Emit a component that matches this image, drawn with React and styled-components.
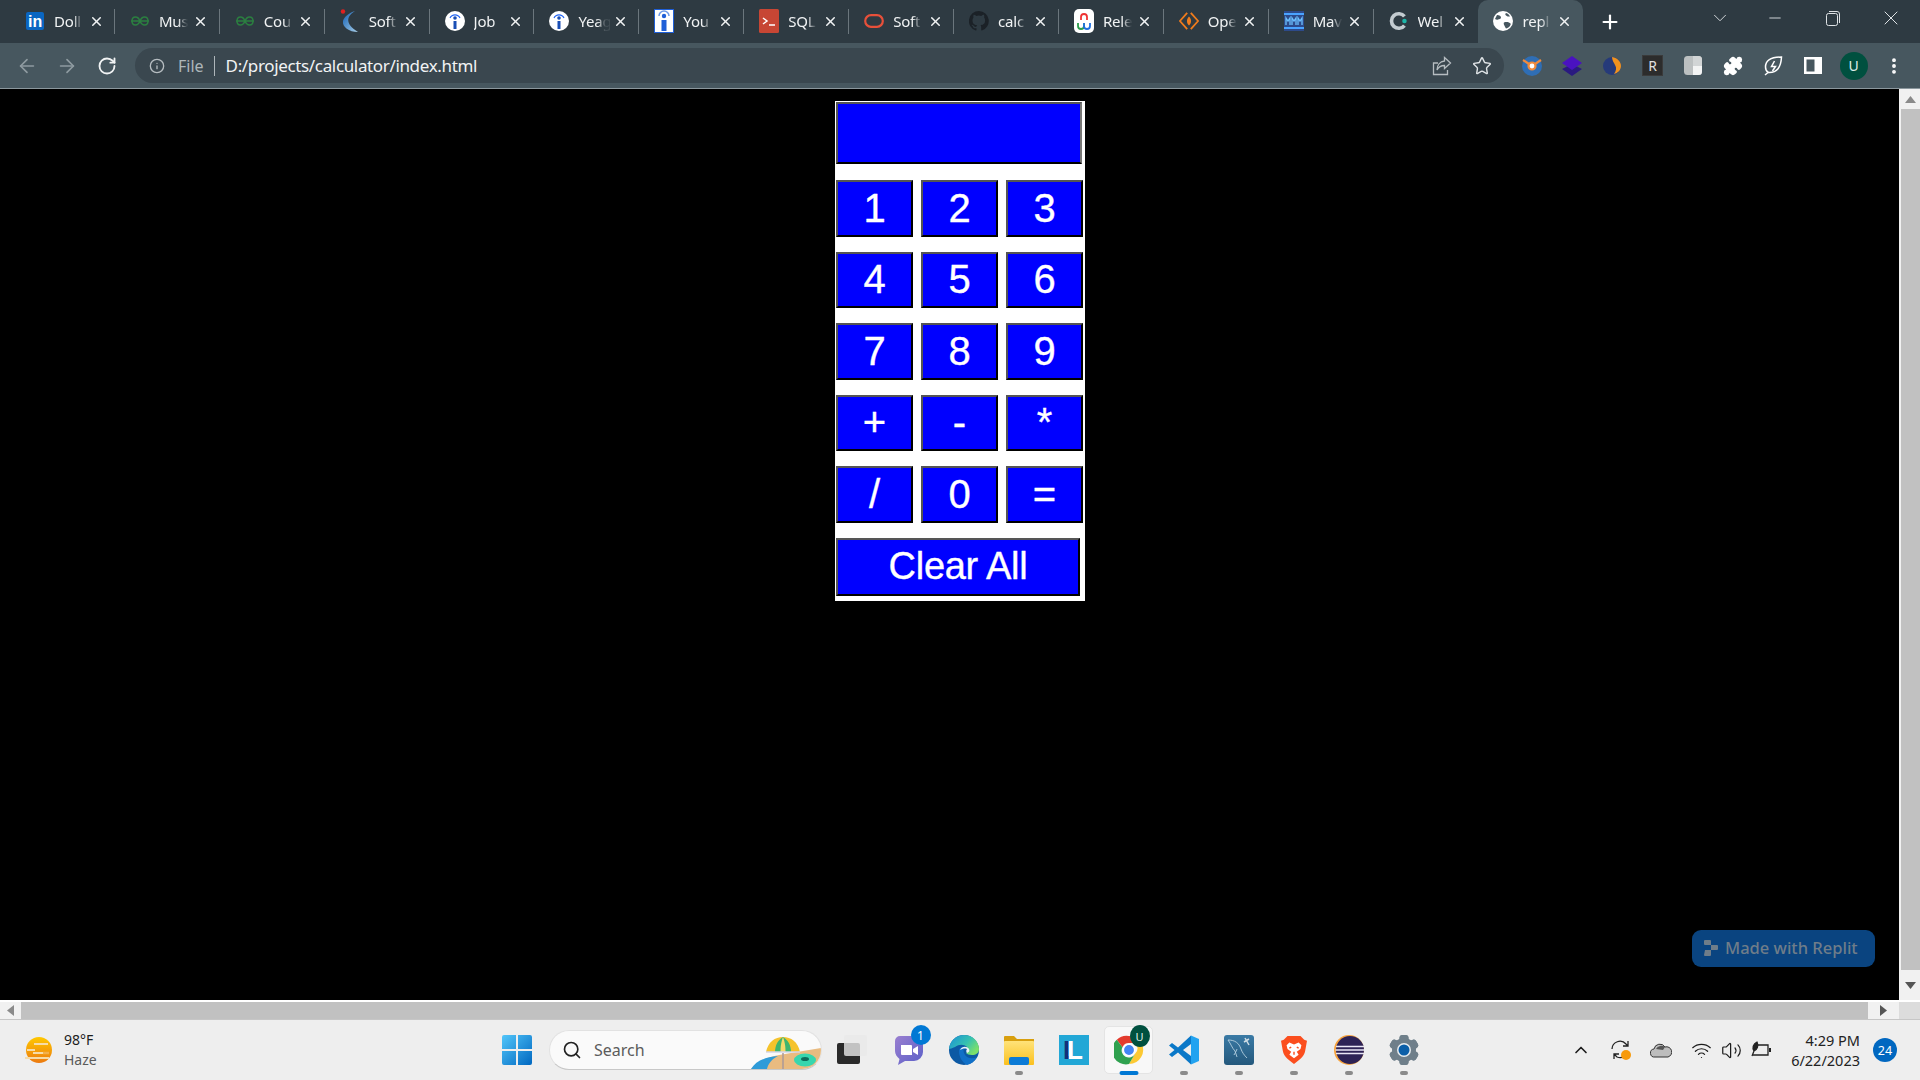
import React from "react";
import styled, { createGlobalStyle } from "styled-components";
import {
  X,
  Plus,
  ChevronDown,
  ArrowLeft,
  ArrowRight,
  RotateCw,
  Info,
  Star,
  Minus,
  Puzzle,
  Search,
  ChevronUp,
  Wifi,
  Volume2,
  MoreVertical,
} from "lucide-react";

const GlobalStyle = createGlobalStyle`
  html, body { margin: 0; padding: 0; height: 100%; overflow: hidden; background: #000; }
  #root { height: 100%; }
  * { box-sizing: border-box; }
`;

const UI_FONT = `"Noto Sans", "Open Sans", sans-serif`;

const Screen = styled.div`
  width: 1920px;
  height: 1080px;
  display: flex;
  flex-direction: column;
  font-family: ${UI_FONT};
  position: relative;
`;

/* tabs */
const TabStrip = styled.div`
  height: 43px;
  background: #2e3a42;
  display: flex;
  padding-left: 10px;
  flex: none;
`;

const Tab = styled.div`
  width: 104.9px;
  height: 43px;
  display: flex;
  align-items: center;
  padding: 0 0 1px 15px;
  position: relative;
  color: #e8eaed;
  background: ${(p) => (p.$active ? "#47575f" : "transparent")};
  border-radius: ${(p) => (p.$active ? "10px 10px 0 0" : "0")};
  ${(p) =>
    p.$sep
      ? `&::after {
    content: "";
    position: absolute;
    right: 0;
    top: 9px;
    height: 25px;
    width: 1px;
    background: #6b767d;
  }`
      : ""}
`;

const TabIcon = styled.div`
  width: 20px;
  height: 24px;
  flex: none;
  display: flex;
  align-items: center;
  justify-content: center;
`;

const TabTitle = styled.div`
  width: 32px;
  margin-left: 9px;
  font-size: 15px;
  line-height: 20px;
  letter-spacing: -0.2px;
  white-space: nowrap;
  overflow: hidden;
  color: #f1f3f4;
  -webkit-mask-image: linear-gradient(90deg, #000 60%, rgba(0, 0, 0, 0.1) 86%);
  mask-image: linear-gradient(90deg, #000 60%, rgba(0, 0, 0, 0.1) 86%);
`;

const TabClose = styled.div`
  margin-left: 2px;
  width: 16px;
  height: 16px;
  display: flex;
  align-items: center;
  justify-content: center;
  color: #f1f3f4;
`;

const NewTab = styled.div`
  width: 36px;
  height: 43px;
  margin-left: 9px;
  display: flex;
  align-items: center;
  justify-content: center;
  color: #fff;
`;

const WindowControls = styled.div`
  margin-left: auto;
  display: flex;
  align-items: center;
  height: 36px;
  color: #dfe3e6;
`;

const WinButton = styled.div`
  width: ${(p) => p.$w}px;
  height: 36px;
  display: flex;
  align-items: center;
  justify-content: center;
`;

/* toolbar */
const Toolbar = styled.div`
  height: 46px;
  background: #47575f;
  border-bottom: 1px solid #8b979d;
  padding: 5px 0 5px 7px;
  display: flex;
  align-items: flex-start;
  flex: none;
`;

const NavButton = styled.div`
  width: 40px;
  height: 35px;
  display: flex;
  align-items: center;
  justify-content: center;
  color: ${(p) => (p.$dim ? "#8f9ba1" : "#f1f3f4")};
`;

const Omnibox = styled.div`
  margin-left: 8px;
  width: 1369px;
  height: 35px;
  border-radius: 18px;
  background: #3a474f;
  display: flex;
  align-items: center;
  padding-left: 14px;
  color: #b6bdc1;
  flex: none;
`;

const FileLabel = styled.span`
  font-size: 16px;
  margin-left: 13px;
  color: #aeb6ba;
`;

const Divider = styled.span`
  width: 1px;
  height: 20px;
  background: #aeb6ba;
  margin: 0 11px 0 10px;
`;

const Url = styled.span`
  font-size: 17px;
  letter-spacing: -0.35px;
  color: #f1f3f4;
`;

const OmniAction = styled.div`
  width: 40px;
  height: 35px;
  display: flex;
  align-items: center;
  justify-content: center;
  margin-left: ${(p) => p.$left || 0}px;
  color: #b6bdc1;
`;

const Extensions = styled.div`
  display: flex;
  margin-left: 8px;
`;

const ExtButton = styled.div`
  width: 40.2px;
  height: 35px;
  display: flex;
  align-items: center;
  justify-content: center;
  color: #fff;
`;

const Avatar = styled.div`
  width: 28px;
  height: 28px;
  border-radius: 50%;
  background: #00503f;
  color: #dfeee9;
  font-size: 14px;
  display: flex;
  align-items: center;
  justify-content: center;
`;

/* page area */
const Middle = styled.div`
  flex: 1;
  display: flex;
  min-height: 0;
`;

const Viewport = styled.div`
  flex: 1;
  background: #000;
  padding: 12px 0 0 835px;
`;

const VScroll = styled.div`
  width: 21px;
  background: #f1f1f1;
  display: flex;
  flex-direction: column;
  align-items: flex-end;
  flex: none;
`;

const ScrollArrow = styled.div`
  width: 19px;
  height: ${(p) => p.$h}px;
  display: flex;
  align-items: center;
  justify-content: center;
`;

const VThumb = styled.div`
  width: 19px;
  flex: 1;
  background: #c1c1c1;
`;

const HScroll = styled.div`
  height: 20px;
  flex: none;
  display: flex;
  background: #f1f1f1;
  border-top: 2px solid #fff;
  border-bottom: 1px solid #c6c6c6;
`;

const HThumb = styled.div`
  width: 1847px;
  background: #c1c1c1;
`;

const HArrow = styled.div`
  width: ${(p) => p.$w}px;
  display: flex;
  align-items: center;
  justify-content: center;
`;

const Corner = styled.div`
  width: 21px;
  background: #dcdcdc;
`;

/* calculator */
const Calculator = styled.div`
  width: 250px;
  height: 500px;
  background: #fff;
  padding: 1px 0 0 1px;
`;

const Display = styled.div`
  width: 246px;
  height: 62px;
  background: #0000ff;
  border-style: solid;
  border-width: 2px;
  border-color: #555 #767676 #000 #555;
  margin-bottom: 16px;
`;

const Keys = styled.div`
  display: grid;
  grid-template-columns: repeat(3, 77px);
  grid-auto-rows: 56.5px;
  column-gap: 8px;
  row-gap: 15px;
`;

const Key = styled.button`
  background: #0000ff;
  color: #fff;
  font-family: "Liberation Sans", Arial, sans-serif;
  font-size: 40px;
  -webkit-text-stroke: 0.35px #fff;
  padding: 0;
  border-style: solid;
  border-width: 2px;
  border-color: #555 #000 #000 #555;
`;

const ClearKey = styled(Key)`
  grid-column: 1 / -1;
  width: 244px;
  height: 58px;
  font-size: 38px;
  letter-spacing: -0.3px;
`;

const Badge = styled.div`
  position: absolute;
  left: 1692px;
  top: 930px;
  width: 183px;
  height: 37px;
  border-radius: 9px;
  background: #0a4480;
  color: #6f7d89;
  font-size: 16.5px;
  font-weight: 500;
  font-family: "Noto Sans", sans-serif;
  display: flex;
  align-items: center;
  padding: 0 0 2px 12px;
  gap: 7px;
`;

/* taskbar */
const Taskbar = styled.div`
  height: 60px;
  flex: none;
  background: #eee;
  display: flex;
  align-items: center;
  position: relative;
`;

const Weather = styled.div`
  width: 502px;
  height: 60px;
  padding-left: 24px;
  display: flex;
  align-items: center;
  flex: none;
`;

const WeatherText = styled.div`
  margin-left: 10px;
  font-size: 14px;
  line-height: 20px;
  color: #1c1c1c;
`;

const Haze = styled.div`
  color: #5a5a5a;
`;

const Pill = styled.div`
  margin-left: 17px;
  width: 273px;
  height: 40px;
  border-radius: 20px;
  background: #fafafa;
  border: 1px solid #e2e2e2;
  border-bottom-color: #c8c8c8;
  display: flex;
  align-items: center;
  padding-left: 12px;
  color: #222;
  position: relative;
  overflow: hidden;
  flex: none;
`;

const PillText = styled.span`
  margin-left: 12px;
  font-size: 16px;
  color: #5c5c5c;
`;

const PillArt = styled.div`
  position: absolute;
  right: 0;
  top: 0;
`;

const AppSlot = styled.div`
  width: ${(p) => p.$w || 55}px;
  height: 60px;
  flex: none;
  display: flex;
  align-items: center;
  justify-content: center;
  position: relative;
  ${(p) =>
    p.$active
      ? `&::before {
    content: "";
    position: absolute;
    left: 3px;
    right: 3px;
    top: 6px;
    bottom: 6px;
    background: #f8f8f8;
    border: 1px solid #e4e4e4;
    border-radius: 5px;
  }`
      : ""}
`;

const AppIcon = styled.div`
  position: relative;
  width: 32px;
  height: 32px;
  display: flex;
  align-items: center;
  justify-content: center;
`;

const RunDot = styled.div`
  position: absolute;
  left: 50%;
  bottom: 5px;
  transform: translateX(-50%);
  width: ${(p) => (p.$active ? 19 : 8)}px;
  height: 4px;
  border-radius: 2px;
  background: ${(p) => (p.$active ? "#0078d4" : "#8a8a8a")};
`;

const CountDot = styled.div`
  position: absolute;
  right: -6px;
  top: -9px;
  width: 20px;
  height: 20px;
  border-radius: 50%;
  background: #0078d4;
  color: #fff;
  font-size: 12px;
  display: flex;
  align-items: center;
  justify-content: center;
`;

const Tray = styled.div`
  position: absolute;
  right: 23px;
  top: 0;
  height: 60px;
  display: flex;
  align-items: center;
`;

const TraySlot = styled.div`
  width: ${(p) => p.$w}px;
  height: 30px;
  margin-left: ${(p) => p.$left || 0}px;
  display: flex;
  align-items: center;
  justify-content: center;
  color: #1c1c1c;
`;

const Clock = styled.div`
  width: 84px;
  text-align: right;
  font-size: 14.5px;
  line-height: 20px;
  color: #222;
`;

const NotifyCount = styled.div`
  margin-left: 13px;
  width: 24px;
  height: 24px;
  border-radius: 50%;
  background: #0067c0;
  color: #fff;
  font-size: 12.5px;
  display: flex;
  align-items: center;
  justify-content: center;
`;

/* favicons */
const LinkedIn = () => (
  <svg width="18" height="18" viewBox="0 0 18 18">
    <rect width="18" height="18" rx="2" fill="#0a66c2" />
    <text x="2" y="15" fontSize="16" fontWeight="700" fill="#fff" fontFamily="Liberation Sans">in</text>
  </svg>
);
const Gfg = () => (
  <svg width="18" height="10" viewBox="0 0 18 10" fill="none" stroke="#2b7f40" strokeWidth="1.500">
    <path d="M0 5h18M9 5C8 2.500 6.500 1 4.500 1S1 2.700 1 5M9 5c1-2.500 2.500-4 4.500-4S17 2.700 17 5M9 5c-1 2.500-2.500 4-4.500 4S1 7.300 1 5M9 5c1 2.500 2.500 4 4.500 4S17 7.300 17 5" />
  </svg>
);
const Crescent = () => (
  <svg width="20" height="24" viewBox="0 0 20 24">
    <defs>
      <linearGradient id="cres" x1="0" y1="0" x2="1" y2="1">
        <stop offset="0" stopColor="#0f5fb5" />
        <stop offset="1" stopColor="#a9cfe8" />
      </linearGradient>
    </defs>
    <path d="M15 2C7 7 4 14 18 23 9 23 2 18 3 12 4 8 9 4 15 2z" fill="url(#cres)" />
    <circle cx="3" cy="2.500" r="2.200" fill="#e02020" />
  </svg>
);
const InfoFav = () => (
  <svg width="20" height="20" viewBox="0 0 20 20">
    <circle cx="10" cy="10" r="10" fill="#fff" />
    <circle cx="10" cy="7" r="1.800" fill="#1a4fb5" />
    <rect x="8.500" y="10" width="3" height="8" fill="#1a4fb5" />
    <path d="M5 7a5.500 5.500 0 0 1 10 0" fill="none" stroke="#2164f3" strokeWidth="1.200" />
  </svg>
);
const YouFav = () => (
  <svg width="20" height="24" viewBox="0 0 20 24">
    <rect x="0.500" y="0.500" width="19" height="23" fill="#fff" stroke="#1f5fd8" />
    <path d="M5 7a5 5 0 0 1 10 0" fill="none" stroke="#6f9be8" strokeWidth="1.500" />
    <circle cx="10" cy="7" r="2.200" fill="#1f5fd8" />
    <rect x="7.500" y="11" width="5" height="11" fill="#1f5fd8" />
  </svg>
);
const SqlFav = () => (
  <svg width="20" height="24" viewBox="0 0 20 24">
    <rect width="20" height="24" rx="1.500" fill="#c74634" />
    <path d="M4 9l4 3-4 3" fill="none" stroke="#fff" strokeWidth="1.500" />
    <path d="M10 16h6" stroke="#fff" strokeWidth="1.500" />
  </svg>
);
const OracleFav = () => (
  <svg width="20" height="14" viewBox="0 0 20 14">
    <rect x="1.200" y="1.200" width="17.600" height="11.600" rx="5.800" fill="none" stroke="#e8503a" strokeWidth="2.200" />
  </svg>
);
const GithubFav = () => (
  <svg width="20" height="22" viewBox="0 0 20 20">
    <path
      fill="#1b2127"
      d="M10 0a10 10 0 0 0-3.200 19.500c.5.100.7-.2.700-.5v-1.800c-2.800.6-3.400-1.300-3.400-1.300-.5-1.200-1.100-1.500-1.100-1.500-.9-.6.100-.6.100-.6 1 .1 1.500 1 1.500 1 .9 1.500 2.300 1.100 2.900.8.100-.6.300-1.100.6-1.300-2.200-.3-4.600-1.100-4.600-5 0-1.100.4-2 1-2.700-.1-.3-.4-1.300.1-2.700 0 0 .8-.3 2.700 1a9.400 9.400 0 0 1 5 0c1.900-1.300 2.700-1 2.700-1 .5 1.400.2 2.400.1 2.700.6.700 1 1.600 1 2.700 0 3.900-2.300 4.700-4.600 5 .4.300.7.900.7 1.900V19c0 .3.200.6.700.5A10 10 0 0 0 10 0z"
    />
  </svg>
);
const ReleFav = () => (
  <svg width="20" height="24" viewBox="0 0 20 24" fill="none" strokeWidth="1.800">
    <rect width="20" height="24" rx="5" fill="#fff" />
    <path d="M7 11V8a3 3 0 0 1 6 0v3" stroke="#e33" />
    <path d="M4 14v3a3 3 0 0 0 6 0v-3" stroke="#2a9d4a" />
    <path d="M10 14v3a3 3 0 0 0 6 0v-3" stroke="#1f6fe0" />
  </svg>
);
const OpeFav = () => (
  <svg width="22" height="22" viewBox="0 0 22 22" fill="none">
    <path d="M9 2L1 11l8 9M13 2l8 9-8 9" stroke="#ef7b1c" strokeWidth="2" />
    <path d="M11 6c3 3 3 7 0 10-3-3-3-7 0-10z" fill="#ef7b1c" />
  </svg>
);
const MavFav = () => (
  <svg width="20" height="20" viewBox="0 0 20 20">
    <rect width="20" height="20" fill="#2d4a8a" />
    <rect y="2" width="20" height="2" fill="#4aa3ff" />
    <rect y="16" width="20" height="2" fill="#4aa3ff" />
    <path d="M2 14V7l2 3 2-3v7M8 14V7l2 3 2-3v7M14 14V7l2 3 2-3v7" fill="none" stroke="#6cc0ff" strokeWidth="1.300" />
  </svg>
);
const WelFav = () => (
  <svg width="22" height="22" viewBox="0 0 22 22">
    <path d="M17 6a8 8 0 1 0 0 10" fill="none" stroke="#c3cbd0" strokeWidth="4" />
    <circle cx="17" cy="11" r="2.500" fill="#1db5a8" />
  </svg>
);
const Globe = () => (
  <svg width="20" height="20" viewBox="0 0 20 20">
    <circle cx="10" cy="10" r="10" fill="#fff" />
    <path d="M4 4c2.500 0 4 1 4 2.500S6 8 5 8.500 3 8.500 2 8zM11 11.500c3-1 5.500 0 6.500 1s-2 5-4.500 5c-1-2-3-4.500-2-6zM13 2c2 .5 3 1.500 4 3.500-2 0-3 0-4-1s-1-1.500 0-2.500z" fill="#47575f" />
  </svg>
);

const tabs = [
  ["Doll", LinkedIn],
  ["Mus", Gfg],
  ["Cou", Gfg],
  ["Soft", Crescent],
  ["Job", InfoFav],
  ["Yeag", InfoFav],
  ["You", YouFav],
  ["SQL", SqlFav],
  ["Soft", OracleFav],
  ["calc", GithubFav],
  ["Rele", ReleFav],
  ["Ope", OpeFav],
  ["Mav", MavFav],
  ["Wel", WelFav],
  ["repl", Globe],
];

/* toolbar extensions */
const ExtOrange = () => (
  <svg width="20" height="20" viewBox="0 0 20 20">
    <circle cx="10" cy="10" r="10" fill="#2f6eb5" />
    <path d="M1 4l6 4M19 4l-6 4" stroke="#f08a3c" strokeWidth="2.200" />
    <circle cx="10" cy="10" r="3.500" fill="#fff" stroke="#f08a3c" strokeWidth="2.200" />
  </svg>
);
const ExtStack = () => (
  <svg width="20" height="20" viewBox="0 0 20 20">
    <path d="M10 8l10 5-10 7-10-7z" fill="#2a1a80" />
    <path d="M10 0l10 7-10 7L0 7z" fill="#4a12c0" />
  </svg>
);
const ExtSwift = () => (
  <svg width="18" height="20" viewBox="0 0 18 20">
    <circle cx="9" cy="10" r="9" fill="#263a7a" />
    <path d="M9 1c6 1 9 5 9 9 0 4-3 7-7 8 2-3 3-6 1-9-1-2-3-5-3-8z" fill="#f0921e" />
  </svg>
);
const ExtR = styled.div`
  width: 21px;
  height: 21px;
  background: #2c2c2c;
  border: 1px solid #3a3a3a;
  color: #e0e0e0;
  font-size: 14px;
  display: flex;
  align-items: center;
  justify-content: center;
`;
const ExtNote = () => (
  <svg width="18" height="19" viewBox="0 0 18 19">
    <rect width="18" height="19" rx="3.500" fill="#bcc0c1" />
    <path d="M9 10h9v5.500a3.500 3.500 0 0 1-3.500 3.500H9z" fill="#f3f4f4" />
    <path d="M9 0h5.500A3.500 3.500 0 0 1 18 3.500V10H9z" fill="#d2d5d6" />
  </svg>
);
const ExtLeaf = () => (
  <svg width="20" height="20" viewBox="0 0 20 20" fill="none" stroke="#fff" strokeWidth="1.500">
    <path d="M18.500 1C9 1 2.500 4 2.500 11c0 3 1 4.500 3 5.500C14 17 18 11 18.500 1z" />
    <path d="M11.500 5l-3 5.500h4L9.500 15M5 16.500L2 19" />
  </svg>
);
const ExtPanel = () => (
  <svg width="18" height="17" viewBox="0 0 18 17">
    <rect width="18" height="17" fill="#fff" />
    <rect x="2.500" y="2.500" width="8" height="12" fill="#47575f" />
  </svg>
);

const ShareIcon = () => (
  <svg width="20" height="20" viewBox="0 0 20 20" fill="none" stroke="currentColor" strokeWidth="1.300">
    <path d="M6 7H1.500v11.500h14V14" />
    <path d="M12.500 1.500l6 5.500-6 5.500V9.500C9 9.500 6.500 11 5 14c0-5 3-8.500 7.500-9z" />
  </svg>
);

/* taskbar apps */
const Sun = () => (
  <svg width="30" height="32" viewBox="0 0 30 32">
    <defs>
      <linearGradient id="sun" x1="0" y1="0" x2="0" y2="1">
        <stop offset="0" stopColor="#ffc800" />
        <stop offset="1" stopColor="#ec7a10" />
      </linearGradient>
    </defs>
    <circle cx="15" cy="16" r="13" fill="url(#sun)" />
    <path d="M10 10h14M3 16h8M1 24h24M9 19h16" stroke="#f6dca8" strokeWidth="2" />
    <path d="M19 19h6" stroke="#f2b04a" strokeWidth="2.500" />
  </svg>
);
const WinLogo = () => (
  <svg width="30" height="30" viewBox="0 0 30 30">
    <defs>
      <linearGradient id="win" x1="0" y1="0" x2="1" y2="1">
        <stop offset="0" stopColor="#52c6fa" />
        <stop offset="1" stopColor="#0067c0" />
      </linearGradient>
    </defs>
    <path d="M0 2a2 2 0 0 1 2-2h12v14H0zM16 0h12a2 2 0 0 1 2 2v12H16zM0 16h14v14H2a2 2 0 0 1-2-2zM16 16h14v12a2 2 0 0 1-2 2H16z" fill="url(#win)" />
  </svg>
);
const Beach = () => (
  <svg width="70" height="38" viewBox="0 0 70 38">
    <path d="M0 38c6-7 16-12 28-14l42-7v21z" fill="#e9bb80" />
    <path d="M0 38c5-8 14-12 27-13-6 3-10 8-11 13z" fill="#2f9bd8" />
    <path d="M32 22v16" stroke="#a99" strokeWidth="1.500" />
    <path d="M15 21C17 11 24 6 32 6s15 5 17 15z" fill="#f5c32c" />
    <path d="M24 21c0-7 3-12 8-15 5 3 8 8 8 15z" fill="#3fb56f" />
    <path d="M29.500 21c0-7 1-11 2.500-15 1.500 4 2.500 8 2.500 15z" fill="#f5d96a" />
    <path d="M15 21h34" stroke="#d4d4e8" strokeWidth="1.500" />
    <ellipse cx="54" cy="29" rx="11" ry="6.500" fill="#37d6ae" />
    <ellipse cx="54" cy="28" rx="4" ry="2" fill="#0d6d5c" />
  </svg>
);
const TaskView = () => (
  <svg width="32" height="30" viewBox="0 0 32 30">
    <rect x="1" y="8" width="23" height="21" rx="2" fill="#2a2a2a" />
    <rect x="8" y="0" width="23" height="21" rx="2" fill="#e8e8e8" fillOpacity="0.8" />
  </svg>
);
const Teams = () => (
  <svg width="30" height="32" viewBox="0 0 30 32">
    <defs>
      <linearGradient id="teams" x1="0" y1="0" x2="1" y2="1">
        <stop offset="0" stopColor="#9a7fd0" />
        <stop offset="1" stopColor="#5a5fc8" />
      </linearGradient>
    </defs>
    <path d="M1 7a5 5 0 0 1 5-5h17a6 6 0 0 1 6 6v10a9 9 0 0 1-9 9h-9l-7 4 1.500-6C3 23 1 20 1 17z" fill="url(#teams)" />
    <path d="M7 11h10a1 1 0 0 1 1 1v9H8a1 1 0 0 1-1-1z" fill="#fff" />
    <path d="M19 15l5-3v9l-5-3z" fill="#fff" />
  </svg>
);
const Edge = () => (
  <svg width="30" height="30" viewBox="0 0 30 30">
    <defs>
      <linearGradient id="edgeA" x1="0" y1="0" x2="1" y2="0.600">
        <stop offset="0" stopColor="#1a90d8" />
        <stop offset="0.600" stopColor="#35c1b1" />
        <stop offset="1" stopColor="#7be06a" />
      </linearGradient>
    </defs>
    <circle cx="15" cy="15" r="15" fill="#0c59a4" />
    <path d="M0 14C1 5 8 0 15 0c8 0 15 6 15 14 0 4-3 6-7 6-3 0-5-1-6-2 2-1 3-3 1-6-3-3-8-3-12 0-3 1-5 2-6 2z" fill="url(#edgeA)" />
    <path d="M10 16c0-3 3-5 6-4-2 2-2 5 0 8 3 4 8 4 12 2-2 4-6 7-10 8-5-3-8-8-8-14z" fill="#1070c8" />
    <path d="M11 15c2-4 7-4 9-1 1 2 0 3-2 4-1-1-1-3 0-4-3-1-5 0-7 1z" fill="#eef4f8" />
  </svg>
);
const Explorer = () => (
  <svg width="30" height="30" viewBox="0 0 30 30">
    <defs>
      <linearGradient id="folder" x1="0" y1="0" x2="0" y2="1">
        <stop offset="0" stopColor="#ffe37a" />
        <stop offset="1" stopColor="#fbc01e" />
      </linearGradient>
    </defs>
    <path d="M0 2a1 1 0 0 1 1-1h9l3 3h17v4H0z" fill="#d89f0e" />
    <rect y="6" width="30" height="24" rx="1" fill="url(#folder)" />
    <rect x="5" y="22" width="20" height="8" rx="2" fill="#0c7bd6" />
  </svg>
);
const LApp = styled.div`
  width: 30px;
  height: 30px;
  background: #22a7d6;
  color: #fff;
  font: 700 26px "Liberation Sans", sans-serif;
  text-shadow: -4px 0 0 #12307a;
  padding-left: 3px;
  display: flex;
  align-items: center;
  justify-content: center;
`;
const Chrome = () => (
  <svg width="30" height="30" viewBox="0 0 32 32">
    <path d="M16 1a15 15 0 0 1 13 7.500H16a7.500 7.500 0 0 0-7 4.500L3 5a15 15 0 0 1 13-4z" fill="#e33b2e" />
    <path d="M29 8.500A15 15 0 0 1 16 31l6.500-11a7.500 7.500 0 0 0 0-11.500z" fill="#fcc934" />
    <path d="M3 5a15 15 0 0 0 13 26l6.500-11a7.500 7.500 0 0 1-13.500-7z" fill="#2fa14f" />
    <circle cx="16" cy="16" r="6" fill="#4285f4" stroke="#fff" strokeWidth="1.500" />
  </svg>
);
const VsCode = () => (
  <svg width="30" height="30" viewBox="0 0 30 30">
    <path d="M22 0.500L9 12.500 3 8 0 10.500 5.500 15 0 19.500 3 22l6-4.500 13 12V21l-8-6 8-6z" fill="#0a78c8" />
    <path d="M22 0.500l8 3.500v22l-8 3.500z" fill="#22a3f0" />
  </svg>
);
const MySql = () => (
  <svg width="30" height="30" viewBox="0 0 30 30">
    <defs>
      <linearGradient id="mysql" x1="0" y1="0" x2="0" y2="1">
        <stop offset="0" stopColor="#3a7aa5" />
        <stop offset="1" stopColor="#24587c" />
      </linearGradient>
    </defs>
    <rect width="30" height="30" rx="3" fill="url(#mysql)" />
    <path d="M4 5c7 0 11 3 13 9 1 3 3 6 6 9M4 5c3 4 4 8 7 11l2 6M13 14c-1 3-2 4-3 6" fill="none" stroke="#b5d0e0" strokeWidth="0.900" />
    <path d="M21 3l4 7M25 4l-5 3" stroke="#d0dde5" strokeWidth="1.500" />
  </svg>
);
const Brave = () => (
  <svg width="26" height="30" viewBox="0 0 28 32">
    <path d="M7 1h14l4 4 3 1-2 11c-1 5-4 8-12 14C6 25 3 22 2 17L0 6l3-1z" fill="#fb4e1e" />
    <path d="M14 10l-5-2-3 3 1 4 4 3-2 3 5 4 5-4-2-3 4-3 1-4-3-3z" fill="#fff" />
    <path d="M11 13l-2 1M17 13l2 1M14 18v3" stroke="#fb4e1e" strokeWidth="1.500" />
  </svg>
);
const Eclipse = () => (
  <svg width="30" height="30" viewBox="0 0 30 30">
    <circle cx="15" cy="15" r="15" fill="#f7a33e" />
    <circle cx="16" cy="15" r="14" fill="#2c2255" />
    <path d="M2 11.500h28M1.500 15h29M2 18.500h28" stroke="#e9e6f5" strokeWidth="1.500" />
  </svg>
);
const Gear = () => (
  <svg width="30" height="30" viewBox="0 0 30 30">
    <g fill="#6f7f8a">
      {[0, 60, 120, 180, 240, 300].map((a) => (
        <rect key={a} x="10.500" y="0" width="9" height="30" rx="3" transform={`rotate(${a} 15 15)`} />
      ))}
      <circle cx="15" cy="15" r="12" />
    </g>
    <circle cx="15" cy="15" r="7" fill="#e8edf0" />
    <circle cx="15" cy="15" r="5.500" fill="#0b5fa8" />
  </svg>
);

const apps = [
  { Icon: TaskView, width: 59 },
  { Icon: Teams, count: 1 },
  { Icon: Edge },
  { Icon: Explorer, running: true },
  { Icon: () => <LApp>L</LApp> },
  { Icon: Chrome, active: true },
  { Icon: VsCode, running: true },
  { Icon: MySql, running: true },
  { Icon: Brave, running: true },
  { Icon: Eclipse, running: true },
  { Icon: Gear, running: true },
];

const ChromeAvatar = styled(Avatar)`
  position: absolute;
  right: -5px;
  top: -9px;
  width: 20px;
  height: 22px;
  font-size: 11px;
`;

const keys = ["1", "2", "3", "4", "5", "6", "7", "8", "9", "+", "-", "*", "/", "0", "="];

export default function App() {
  return (
    <Screen>
      <GlobalStyle />
      <TabStrip>
        {tabs.map(([title, Icon], i) => (
          <Tab key={i} $active={i === 14} $sep={i < 13}>
            <TabIcon>
              <Icon />
            </TabIcon>
            <TabTitle>{title}</TabTitle>
            <TabClose>
              <X size={15} strokeWidth={2.4} />
            </TabClose>
          </Tab>
        ))}
        <NewTab>
          <Plus size={22} strokeWidth={2.4} />
        </NewTab>
        <WindowControls>
          <WinButton $w={52}>
            <ChevronDown size={22} strokeWidth={1} />
          </WinButton>
          <WinButton $w={58}>
            <Minus size={18} strokeWidth={1.2} />
          </WinButton>
          <WinButton $w={58}>
            <svg width="14" height="15" viewBox="0 0 14 15" fill="none" stroke="currentColor">
              <rect x="0.500" y="2.500" width="11" height="12" rx="2" />
              <path d="M3 .5h8a2.500 2.500 0 0 1 2.500 2.500v9" />
            </svg>
          </WinButton>
          <WinButton $w={58}>
            <X size={24} strokeWidth={1} />
          </WinButton>
        </WindowControls>
      </TabStrip>

      <Toolbar>
        <NavButton $dim>
          <ArrowLeft size={22} strokeWidth={1.8} />
        </NavButton>
        <NavButton $dim>
          <ArrowRight size={22} strokeWidth={1.8} />
        </NavButton>
        <NavButton>
          <RotateCw size={20} strokeWidth={2.2} />
        </NavButton>
        <Omnibox>
          <Info size={16} />
          <FileLabel>File</FileLabel>
          <Divider />
          <Url>D:/projects/calculator/index.html</Url>
          <OmniAction $left={945}>
            <ShareIcon />
          </OmniAction>
          <OmniAction>
            <Star size={20} strokeWidth={1.7} color="#dfe3e6" />
          </OmniAction>
        </Omnibox>
        <Extensions>
          <ExtButton>
            <ExtOrange />
          </ExtButton>
          <ExtButton>
            <ExtStack />
          </ExtButton>
          <ExtButton>
            <ExtSwift />
          </ExtButton>
          <ExtButton>
            <ExtR>R</ExtR>
          </ExtButton>
          <ExtButton>
            <ExtNote />
          </ExtButton>
          <ExtButton>
            <Puzzle size={20} fill="#fff" />
          </ExtButton>
          <ExtButton>
            <ExtLeaf />
          </ExtButton>
          <ExtButton>
            <ExtPanel />
          </ExtButton>
          <ExtButton>
            <Avatar>U</Avatar>
          </ExtButton>
          <ExtButton>
            <MoreVertical size={20} strokeWidth={2.6} />
          </ExtButton>
        </Extensions>
      </Toolbar>

      <Middle>
        <Viewport>
          <Calculator>
            <Display />
            <Keys>
              {keys.map((k) => (
                <Key key={k}>{k}</Key>
              ))}
              <ClearKey>Clear All</ClearKey>
            </Keys>
          </Calculator>
        </Viewport>
        <VScroll>
          <ScrollArrow $h={20}>
            <svg width="11" height="7" viewBox="0 0 11 7">
              <path d="M5.500 0L11 7H0z" fill="#8a8a8a" />
            </svg>
          </ScrollArrow>
          <VThumb />
          <ScrollArrow $h={30}>
            <svg width="11" height="7" viewBox="0 0 11 7">
              <path d="M0 0h11L5.500 7z" fill="#555" />
            </svg>
          </ScrollArrow>
        </VScroll>
      </Middle>

      <HScroll>
        <HArrow $w={21}>
          <svg width="7" height="11" viewBox="0 0 7 11">
            <path d="M7 0v11L0 5.500z" fill="#8a8a8a" />
          </svg>
        </HArrow>
        <HThumb />
        <HArrow $w={31}>
          <svg width="7" height="11" viewBox="0 0 7 11">
            <path d="M0 0v11l7-5.500z" fill="#555" />
          </svg>
        </HArrow>
        <Corner />
      </HScroll>

      <Taskbar>
        <Weather>
          <Sun />
          <WeatherText>
            98°F
            <Haze>Haze</Haze>
          </WeatherText>
        </Weather>
        <WinLogo />
        <Pill>
          <Search size={20} strokeWidth={2} />
          <PillText>Search</PillText>
          <PillArt>
            <Beach />
          </PillArt>
        </Pill>
        {apps.map(({ Icon, count, running, active, width }, i) => (
          <AppSlot key={i} $active={active} $w={width}>
            <AppIcon>
              <Icon />
              {count && <CountDot>{count}</CountDot>}
              {active && <ChromeAvatar>U</ChromeAvatar>}
            </AppIcon>
            {(running || active) && <RunDot $active={active} />}
          </AppSlot>
        ))}
        <Tray>
          <TraySlot $w={40}>
            <ChevronUp size={20} strokeWidth={2} />
          </TraySlot>
          <TraySlot $w={40}>
            <svg width="22" height="22" viewBox="0 0 22 22" fill="none" stroke="#222" strokeWidth="1.300">
              <path d="M2 10a8 8 0 0 1 14-5l2 2M18 2v5h-5M18 12a8 8 0 0 1-11 6l-3-3M4 20v-5h5" />
              <circle cx="16" cy="16" r="5" fill="#f79a0a" stroke="none" />
            </svg>
          </TraySlot>
          <TraySlot $w={40}>
            <svg width="22" height="16" viewBox="0 0 22 16">
              <path d="M5 15a4 4 0 0 1-1-8 6 6 0 0 1 11-2 5 5 0 0 1 3 10z" fill="#bdbdbd" stroke="#333" />
              <path d="M6 7a6 6 0 0 1 9-2l-2 3z" fill="#555" />
            </svg>
          </TraySlot>
          <TraySlot $w={30} $left={5}>
            <Wifi size={21} strokeWidth={1.4} />
          </TraySlot>
          <TraySlot $w={30}>
            <Volume2 size={21} strokeWidth={1.4} />
          </TraySlot>
          <TraySlot $w={30}>
            <svg width="22" height="18" viewBox="0 0 22 18" fill="none" stroke="#222" strokeWidth="1.300">
              <path d="M8 4h10v10H3" />
              <path d="M20 7v4" strokeWidth="2" />
              <path d="M7 1C3 3 2 7 4 10c3-1 5-5 3-9zM4 10l-2 5" fill="#222" />
            </svg>
          </TraySlot>
          <Clock>
            4:29 PM
            <br />
            6/22/2023
          </Clock>
          <NotifyCount>24</NotifyCount>
        </Tray>
      </Taskbar>

      <Badge>
        <svg width="14" height="16" viewBox="0 0 14 16" fill="#6f7d89">
          <path d="M0 1a1 1 0 0 1 1-1h5a1 1 0 0 1 1 1v4H1a1 1 0 0 1-1-1zM7 5h6a1 1 0 0 1 1 1v3a1 1 0 0 1-1 1H7zM1 10h6v5a1 1 0 0 1-1 1H1a1 1 0 0 1-1-1z" />
        </svg>
        Made with Replit
      </Badge>
    </Screen>
  );
}
